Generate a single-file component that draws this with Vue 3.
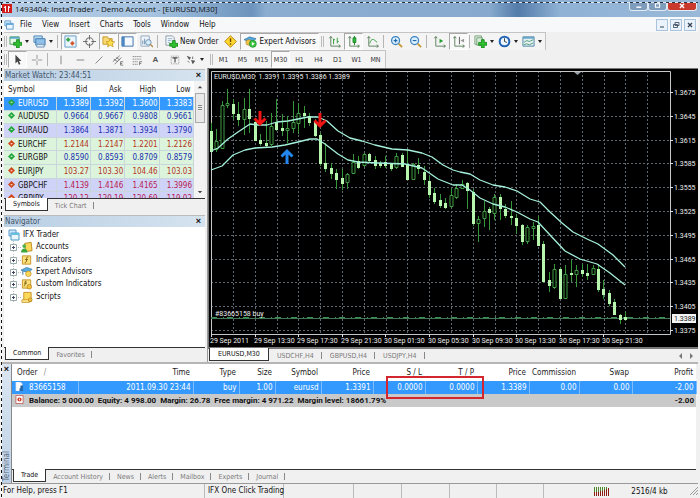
<script setup>
const menus = ['File', 'View', 'Insert', 'Charts', 'Tools', 'Window', 'Help']

const plus = '<path d="M8 5h3v3h3v3h-3v3H8v-3H5V8h3z" fill="#2fc02f" stroke="#0b7d12" stroke-width=".8"/>'
const axes = '<path d="M3 2v10h10M1.500 3.500L3 1.500l1.500 2M11.500 10.500l2 1.500-2 1.500" fill="none" stroke="#5b7f5b"/>'

const icons = {
  newChart: '<path d="M1 2h10v8H1z" fill="#e8f6e6" stroke="#4f9a62"/><path d="M1 2h10v2H1z" fill="#58a9c9"/>' + plus,
  profiles: '<path d="M1 1h9v7H1z" fill="#b7d8f1" stroke="#4c86b8"/><path d="M3 4h10v7H3z" fill="#8fc0ea" stroke="#3e76aa"/><path d="M4 10h8v3H4z" fill="#dceaf6" stroke="#6f94b5"/>',
  watch: '<path d="M1 1h12v12H1z" fill="#e9f4fc" stroke="#5e9cc8"/><path d="M4.500 2.500L7 5 4.500 7.500 2 5z" fill="#3aa64a"/><path d="M9 6.500L11.500 9 9 11.500 6.500 9z" fill="#d4572e"/>',
  target: '<circle cx="7" cy="7" r="4" fill="none" stroke="#777" stroke-width="1.200"/><path d="M7 0v5M7 9v5M0 7h5M9 7h5" stroke="#666"/>',
  star: '<path d="M1 2h5l1 2h4v6H1z" fill="#f7d872" stroke="#c79a2a"/><path d="M9 4l1.400 3 3.300.300-2.500 2.200.800 3.300-3-1.800-3 1.800.800-3.300L4.300 7.300l3.300-.300z" fill="#ffe24d" stroke="#bd8b1b" stroke-width=".7"/>',
  panel: '<path d="M1 2h12v10H1z" fill="#f3f9ff" stroke="#3a6ea5"/><path d="M1 2h3v10H1z" fill="#4c87c4"/>',
  tester: '<path d="M1 1h9v11H1z" fill="#eef4fa" stroke="#93a9bd"/><path d="M3 10V6M5 10V4M7 10V7" stroke="#6c8fae"/><circle cx="9" cy="8" r="3" fill="#d6ecfb" stroke="#6b8fb0"/><path d="M11 10l3 3" stroke="#b08b4a" stroke-width="1.500"/>',
  order: '<path d="M1 1h7l2 2v8H1z" fill="#f7fafc" stroke="#8798a6"/><path d="M3 4h5M3 6h4M3 8h2" stroke="#8fb0cc"/><path d="M8 6h3v3h3v3h-3v2H8v-2H5V9h3z" fill="#2fc02f" stroke="#0b7d12" stroke-width=".8"/>',
  alert: '<path d="M7 .700L13.300 7 7 13.300.700 7z" fill="#ffd630" stroke="#b98510"/><path d="M7 3.500v4M7 9v1.500" stroke="#6b4a00" stroke-width="1.500"/>',
  expert: '<path d="M0 5l6-3 7 2-5 4z" fill="#56a7dc" stroke="#2a6d9d" stroke-width=".7"/><circle cx="5" cy="8" r="3" fill="#f0c34a" stroke="#a5771d" stroke-width=".6"/><circle cx="9.500" cy="9.500" r="3.800" fill="#3ec43e" stroke="#138a20" stroke-width=".7"/><path d="M8.500 7.500v4l3-2z" fill="#fff"/>',
  bars: axes + '<path d="M6 4v6M6 5h1.500M10 3v6M10 7h1.500" stroke="#2c9a38"/>',
  candles: axes + '<path d="M8 1v10" stroke="#16801f"/><path d="M6.500 3h3v5h-3z" fill="#30c43c" stroke="#16801f"/>',
  line: axes + '<path d="M4 9c2-6 4-5 8-1" fill="none" stroke="#2c9a38"/>',
  zoomIn: '<circle cx="6" cy="6" r="4.300" fill="#d9f0ff" stroke="#3a80c0" stroke-width="1.300"/><path d="M6 4v4M4 6h4" stroke="#2468a8" stroke-width="1.200"/><path d="M9.300 9.300L13 13" stroke="#c89a38" stroke-width="2"/>',
  zoomOut: '<circle cx="6" cy="6" r="4.300" fill="#d9f0ff" stroke="#3a80c0" stroke-width="1.300"/><path d="M4 6h4" stroke="#2468a8" stroke-width="1.200"/><path d="M9.300 9.300L13 13" stroke="#c89a38" stroke-width="2"/>',
  scroll: axes + '<path d="M7 4v5l4-2.500z" fill="#25a233"/>',
  shift: axes + '<path d="M8 2v8" stroke="#555"/><path d="M13 4v4L9 6z" fill="#999"/>',
  indicators: '<path d="M1 1h7v9H1z" fill="#eef6ee" stroke="#6f9d75"/><path d="M3 3h6v8H3z" fill="#d9efd9" stroke="#6f9d75"/>' + plus,
  clock: '<circle cx="7" cy="7" r="5.200" fill="#eef7ff" stroke="#2466b4" stroke-width="2.200"/><path d="M7 3.500V7l2.500 1" fill="none" stroke="#333"/>',
  template: '<path d="M1 2h12v10H1z" fill="#e4f1f5" stroke="#4b87a8"/><path d="M1 2h12v2H1z" fill="#6aa6c9"/><path d="M2 8l3-2 3 1 4-2M2 10.500l3-1 3 1 4-2" fill="none" stroke="#4f9a70"/>',
  cursor: '<path d="M4 1v10l2.400-2.200L8 12.500l1.800-.800-1.600-3.500H11z" fill="#444"/>',
  cross: '<path d="M7 1v5M7 8v5M1 7h5M8 7h5" stroke="#888"/>',
  vline: '<path d="M7 2v10" stroke="#777"/>',
  hline: '<path d="M3 7h9" stroke="#777"/>',
  trend: '<path d="M3 11l8-8" stroke="#777"/>',
  channel: '<path d="M1 9l8-7M3 12l8-8M2 6l5 3M5 4l4 3" stroke="#666" stroke-width=".9"/><path d="M13 9h-3v4h3M10 11h2" fill="none" stroke="#555" stroke-width=".8"/>',
  fibo: '<path d="M2 3h10M2 6h10M2 9h6M2 12h6" stroke="#777" stroke-dasharray="1.500 .7"/><path d="M10 13V9h3M10 11h2" fill="none" stroke="#555" stroke-width=".8"/>',
  label: '<path d="M2.500 2.500h9v9h-9z" fill="none" stroke="#888" stroke-dasharray="1 1"/><path d="M4 4.500h6M7 4.500V10" stroke="#444" stroke-width="1.300"/>',
  arrows: '<path d="M2 2l5 2-2 3zM7 7l5 1-3 4z" fill="#555"/><path d="M3 8l2 2M9 3v3" stroke="#555"/>',
}

const mainTools = [
  { icon: 'newChart', label: 'New chart', menu: true },
  { icon: 'profiles', label: 'Profiles', menu: true },
  { sep: true },
  { icon: 'watch', label: 'Market Watch', on: true },
  { icon: 'target', label: 'Data Window' },
  { icon: 'star', label: 'Navigator', on: true },
  { icon: 'panel', label: 'Terminal', on: true },
  { icon: 'tester', label: 'Strategy Tester' },
  { sep: true },
  { icon: 'order', label: 'New Order', text: 'New Order' },
  { icon: 'alert', label: 'Auto check' },
  { icon: 'expert', label: 'Expert Advisors', text: 'Expert Advisors', on: true },
  { grip: true },
  { icon: 'bars', label: 'Bar chart' },
  { icon: 'candles', label: 'Candlesticks', on: true },
  { icon: 'line', label: 'Line chart' },
  { sep: true },
  { icon: 'zoomIn', label: 'Zoom in' },
  { icon: 'zoomOut', label: 'Zoom out' },
  { sep: true },
  { icon: 'scroll', label: 'Auto scroll' },
  { icon: 'shift', label: 'Chart shift', on: true },
  { sep: true },
  { icon: 'indicators', label: 'Indicators', menu: true },
  { icon: 'clock', label: 'Periods', menu: true },
  { icon: 'template', label: 'Templates', menu: true },
]
const drawTools = [
  { icon: 'cursor', label: 'Cursor', on: true },
  { icon: 'cross', label: 'Crosshair' },
  { sep: true },
  { icon: 'vline', label: 'Vertical line' },
  { icon: 'hline', label: 'Horizontal line' },
  { icon: 'trend', label: 'Trendline' },
  { icon: 'channel', label: 'Channel' },
  { icon: 'fibo', label: 'Fibonacci' },
  { letter: 'A', label: 'Text' },
  { icon: 'label', label: 'Text label' },
  { icon: 'arrows', label: 'Arrows', menu: true },
]
const periods = ['M1', 'M5', 'M15', 'M30', 'H1', 'H4', 'D1', 'W1', 'MN']

const quotes = [
  ['EURUSD', '1.3389', '1.3392', '1.3600', '1.3383', 'up', 'sel'],
  ['AUDUSD', '0.9664', '0.9667', '0.9808', '0.9661', 'up', 'green'],
  ['EURAUD', '1.3864', '1.3871', '1.3934', '1.3790', 'up', 'violet'],
  ['EURCHF', '1.2144', '1.2147', '1.2201', '1.2126', 'down', 'green'],
  ['EURGBP', '0.8590', '0.8593', '0.8709', '0.8579', 'up', 'green'],
  ['EURJPY', '103.27', '103.30', '104.46', '103.03', 'down', 'green'],
  ['GBPCHF', '1.4139', '1.4146', '1.4165', '1.3996', 'down', 'violet'],
  ['GBPJPY', '120.12', '120.19', '120.69', '119.02', 'down', 'violet'],
]

const gold = '<path d="M3 1h8v10H3z" fill="#fbd75a" stroke="#c39324"/>'
const tree = [
  { name: 'Accounts', svg: '<path d="M4 2l7-1 1 9-7 1z" fill="#fbd75a" stroke="#b98a1e"/><circle cx="3.500" cy="5" r="2" fill="#4bb04b"/><path d="M0 12c0-6 7-6 7 0z" fill="#3fa63f"/>' },
  { name: 'Indicators', svg: '<path d="M1.500 1.500h9v9h-9z" fill="#fbe07a" stroke="#c39324"/><path d="M8 3c-2-1-2 1-2 3s-.500 3-2 3M4.500 5.500h3" fill="none" stroke="#7a5a10"/>' },
  { name: 'Expert Advisors', svg: '<path d="M0 4l6-3 6 2-4 4z" fill="#58acd9" stroke="#2a6d9d" stroke-width=".7"/><circle cx="8" cy="8" r="3" fill="#fbd75a" stroke="#b98a1e" stroke-width=".7"/><path d="M2 5v4" stroke="#2a6d9d"/>' },
  { name: 'Custom Indicators', svg: '<path d="M1.500 1.500h9v9h-9z" fill="#fbe07a" stroke="#c39324"/><path d="M6 3C4 2 5 4 4.500 6S4 8 3 8M3.500 5h3" fill="none" stroke="#7a5a10"/><circle cx="9" cy="9" r="2.500" fill="#f5c33a" stroke="#a5771d" stroke-width=".7"/>' },
  { name: 'Scripts', svg: gold + '<path d="M1 9h8v3H1z" fill="#fde68a" stroke="#c39324" stroke-width=".8"/><circle cx="10" cy="9" r="2" fill="#f5c33a" stroke="#a5771d" stroke-width=".7"/>' },
]

const gridX = Array.from({ length: 20 }, (_, i) => Math.round(233 + i * 21.8) + 0.5)
const gridY = Array.from({ length: 11 }, (_, i) => Math.round(92 + i * 23.8) + 0.5)
const prices = gridY.map((y, i) => ({ y, label: (1.3675 - i * 0.003).toFixed(4) }))
const times = ['29 Sep 2011', '29 Sep 13:30', '29 Sep 17:30', '29 Sep 21:30', '30 Sep 01:30', '30 Sep 05:30', '30 Sep 09:30', '30 Sep 13:30', '30 Sep 17:30', '30 Sep 21:30']
  .map((label, i) => ({ label, x: 210 + Math.round(i * 43.6) }))

// high, body top, body bottom, low; f = falling (filled), r = rising (hollow)
const candles = `123 131 151 152 f|129 141 149 152 r|101 105 148 149 r|89 103 105 108 r|99 104 113 119 f|102 114 119 126 f|98 109 119 135 r|89 109 118 133 f
121 122 140 141 f|134 140 143 146 f|121 143 145 147 f|113 126 144 146 r|99 122 129 131 f|114 128 130 136 f|116 128 130 143 r|101 122 128 133 r
103 113 123 134 r|106 113 115 128 f|113 116 122 126 f|119 122 135 137 f|133 135 163 166 f|143 163 168 172 f|163 168 173 179 f|169 173 179 189 f
169 178 183 190 f|173 174 182 189 r|154 162 173 174 r|156 161 167 169 f|153 154 165 167 r|153 154 160 163 f|156 160 165 169 f|161 163 165 168 f
156 162 165 168 f|163 164 168 171 f|153 156 167 169 r|153 155 166 167 f|149 164 179 180 f|163 164 179 180 r|158 165 168 174 f|166 172 179 185 f
176 181 194 198 f|188 193 201 204 f|194 200 205 208 f|198 203 207 209 f|188 195 206 208 r|184 188 197 199 r|180 184 188 189 r|182 183 190 209 f
189 192 223 226 f|216 219 223 242 r|201 211 218 227 r|207 209 212 230 f|194 197 213 220 r|194 197 208 220 f|204 209 215 218 f|201 216 217 225 f
214 218 225 234 f|224 225 241 245 f|225 227 241 244 r|222 226 228 240 r|216 225 245 246 f|241 244 281 283 f|272 280 285 292 f|264 269 287 289 r
267 269 298 299 f|265 274 298 299 r|260 273 274 282 f|265 270 274 287 r|264 270 273 277 f|264 273 275 280 f|265 268 274 275 r|264 269 289 292 f
280 289 294 299 f|290 293 303 306 f|299 302 314 315 f|314 315 319 324 f|312 317 319 321 f`
  .split(/[|\n]/)
  .map((row, i) => {
    const [high, top, bottom, low, kind] = row.trim().split(' ')
    return { x: Math.round(211 + i * 5.45) + 0.5, high: +high, top: +top, bottom: +bottom, low: +low, rising: kind === 'r' }
  })
const upperBand = '211,151 218,148 228,139 238,132 250,124 258,125 267,125 277,122 288,121 298,119 308,117 318,117 327,121 338,131 350,138 362,141 375,145 392,149 408,150 422,153 432,157 443,165 453,170 460,172 470,174 480,180 493,185 505,187 517,191 530,199 540,202 550,212 562,223 573,232 587,239 598,244 613,255 625,267'
const lowerBand = '211,170 222,166 233,155 245,150 255,148 272,147 285,145 298,142 310,139 317,139 325,144 338,154 348,160 358,162 378,163 405,164 422,168 438,179 453,185 462,185 470,190 480,198 493,204 505,207 517,212 530,219 538,222 550,235 565,251 580,259 597,264 610,273 625,285'

const chartTabs = ['EURUSD,M30', 'USDCHF,H4', 'GBPUSD,H4', 'USDJPY,H4']
const orderHead = ['Time', 'Type', 'Size', 'Symbol', 'Price', 'S / L', 'T / P', 'Price', 'Commission', 'Swap', 'Profit']
const orderRow = ['2011.09.30 23:44', 'buy', '1.00', 'eurusd', '1.3391', '0.0000', '0.0000', '1.3389', '0.00', '0.00', '-2.00']
const terminalTabs = ['Trade', 'Account History', 'News', 'Alerts', 'Mailbox', 'Experts', 'Journal']
</script>

<template>
  <div class="window">
    <header class="titlebar">
      <svg class="logo" viewBox="0 0 10 11"><path d="M0 1h10v9H0z" fill="#d31b1b" /><path d="M3.500 3v6M6.500 3v6M2 5l1.500-2M8 5L6.500 3" fill="none" stroke="#fff" /></svg>
      <h1>1493404: InstaTrader - Demo Account - [EURUSD,M30]</h1>
      <div class="sysbuttons">
        <button class="sys" aria-label="Minimize"><svg viewBox="0 0 20 10"><path d="M7 6h7" stroke="#fff" stroke-width="2" /></svg></button>
        <button class="sys" aria-label="Maximize"><svg viewBox="0 0 20 10"><path d="M7 1h6v5H7z" fill="none" stroke="#fff" stroke-width="1.500" /></svg></button>
        <button class="sys close" aria-label="Close"><svg viewBox="0 0 20 10"><path d="M7 1l6 6M13 1L7 7" stroke="#fff" stroke-width="2" /></svg></button>
      </div>
    </header>

    <nav class="menubar">
      <svg class="docicon" viewBox="0 0 12 12"><path d="M1 1h7v6H1z" fill="#cfe6f7" stroke="#5a9bd0" /><path d="M3 4h8v7H3z" fill="#eaf5fd" stroke="#4a8bc4" /><path d="M3 4h8v2H3z" fill="#66aee0" /></svg>
      <button v-for="m in menus" :key="m" class="menu">{{ m }}</button>
      <div class="docbuttons">
        <button aria-label="Minimize chart"><svg viewBox="0 0 10 10"><path d="M3 7h4" stroke="#345" /></svg></button>
        <button aria-label="Restore chart"><svg viewBox="0 0 10 10"><path d="M4 2.500h4v3H4zM2.500 4.500h4v3h-4z" fill="none" stroke="#345" stroke-width=".8" /></svg></button>
        <button aria-label="Close chart"><svg viewBox="0 0 10 10"><path d="M3 3l4 4M7 3L3 7" stroke="#345" stroke-width="1.300" /></svg></button>
      </div>
    </nav>

    <div class="toolrow">
      <div class="toolbar">
        <i class="grip"></i>
        <template v-for="(t, i) in mainTools" :key="i">
          <i v-if="t.sep" class="sep"></i>
          <i v-else-if="t.grip" class="grip edge"></i>
          <button v-else class="tool" :class="{ on: t.on, wide: t.text, drop: t.menu }" :aria-label="t.label">
            <svg class="icon" viewBox="0 0 14 14" v-html="icons[t.icon]"></svg>
            <span v-if="t.text">{{ t.text }}</span>
          </button>
        </template>
      </div>
    </div>
    <div class="toolrow">
      <div class="toolbar small">
        <i class="grip"></i>
        <template v-for="(t, i) in drawTools" :key="i">
          <i v-if="t.sep" class="sep"></i>
          <button v-else class="tool" :class="{ on: t.on, drop: t.menu }" :aria-label="t.label">
            <b v-if="t.letter" class="letter">{{ t.letter }}</b>
            <svg v-else class="icon" viewBox="0 0 14 14" v-html="icons[t.icon]"></svg>
          </button>
        </template>
        <i class="grip edge"></i>
        <button v-for="p in periods" :key="p" class="tool period" :class="{ on: p === 'M30' }">{{ p }}</button>
      </div>
    </div>

    <main class="work">
      <aside class="side">
        <section class="panel watch">
          <div class="caption"><h2>Market Watch: 23:44:51</h2><button class="x" aria-label="Close Market Watch">×</button></div>
          <div class="scroller">
            <table class="quotes">
              <thead><tr><th>Symbol</th><th>Bid</th><th>Ask</th><th>High</th><th>Low</th></tr></thead>
              <tbody>
                <tr v-for="q in quotes" :key="q[0]" :class="[q[5], q[6]]">
                  <td>
                    <svg class="dir" viewBox="0 0 8 8"><path d="M4 0l4 4-4 4-4-4z" :fill="q[5] === 'up' ? '#22a53c' : '#d0481d'" /><path :d="q[5] === 'up' ? 'M4 2.500l1.500 2h-3z' : 'M4 5.500l1.500-2h-3z'" fill="#fff" opacity=".7" /></svg>{{ q[0] }}
                  </td>
                  <td>{{ q[1] }}</td><td>{{ q[2] }}</td><td>{{ q[3] }}</td><td>{{ q[4] }}</td>
                </tr>
              </tbody>
            </table>
            <div class="scrollbar">
              <svg viewBox="0 0 8 5"><path d="M4 1l3 3H1z" fill="#444" /></svg>
              <div class="thumb"></div>
              <svg viewBox="0 0 8 5"><path d="M4 4L1 1h6z" fill="#444" /></svg>
            </div>
          </div>
          <div class="tabs"><button class="tab active">Symbols</button><button class="tab">Tick Chart</button></div>
        </section>

        <section class="panel navigator">
          <div class="caption"><h2>Navigator</h2><button class="x" aria-label="Close Navigator">×</button></div>
          <div class="treebox">
            <ul class="tree">
              <li class="root"><svg class="node" viewBox="0 0 12 12"><path d="M1 1h7v6H1z" fill="#cfe6f7" stroke="#5a9bd0" /><path d="M3 4h8v7H3z" fill="#eaf5fd" stroke="#4a9bc4" /><path d="M3 4h8v2H3z" fill="#66bee0" /></svg>IFX Trader</li>
              <li v-for="n in tree" :key="n.name">
                <svg class="expander" viewBox="0 0 11 12"><path d="M3.500 0v12M6 6.500h5" stroke="#bbb" stroke-dasharray="1 1" /><path d="M.500 3.500h6v6h-6z" fill="#fff" stroke="#9aa" /><path d="M2 6.500h3M3.500 5v3" stroke="#446" /></svg>
                <svg class="node" viewBox="0 0 13 12" v-html="n.svg"></svg>{{ n.name }}
              </li>
            </ul>
          </div>
          <div class="tabs"><button class="tab active">Common</button><button class="tab">Favorites</button></div>
        </section>
      </aside>

      <section class="chartpane">
        <svg class="chart" viewBox="208 68 490 279" role="img" aria-label="EURUSD M30 candlestick chart">
          <path d="M208 68h490v279H208z" fill="#000" />
          <path d="M208.500 347V68.500H698" fill="none" stroke="#777" />
          <g stroke="#5f6972" stroke-dasharray="2 2">
            <path v-for="x in gridX" :key="x" :d="`M${x} 71V334`" />
            <path v-for="y in gridY" :key="y" :d="`M211 ${y}H670`" />
          </g>
          <path d="M211.500 334V71.500H670.500V334.500H211" fill="none" stroke="#c4c8c8" />
          <path v-for="p in prices" :key="p.label" :d="`M670 ${p.y}h3`" stroke="#ddd" />
          <path v-for="t in times" :key="t.label" :d="`M${t.x + 1}.5 334v3`" stroke="#ddd" />
          <path d="M574 72h7l-3.500 3z" fill="#9aa0a8" />
          <path d="M211 318.500H670" stroke="#3f7a54" />
          <path d="M211 317.500H670" stroke="#3f8f58" stroke-dasharray="6 6 1 3" />
          <g v-for="c in candles" :key="c.x">
            <path :d="`M${c.x} ${c.high}V${c.low}`" stroke="#35963a" />
            <path v-if="c.rising" :d="`M${c.x - 1.5} ${c.top + 0.5}h3V${c.bottom + 0.5}h-3z`" fill="#000" stroke="#3f9c42" />
            <path v-else :d="`M${c.x - 1.5} ${c.top}h3V${c.bottom + 1}h-3z`" fill="#b8f5ae" />
          </g>
          <g fill="none" stroke="#a5f0dc" stroke-width="1.300" stroke-linejoin="round">
            <polyline :points="upperBand" />
            <polyline :points="lowerBand" />
          </g>
          <g fill="none" stroke-width="3">
            <path d="M260 111v13M254.500 118.500l5.500 5.500 5.500-5.500" stroke="#f01414" />
            <path d="M320 113v13M314.500 120.500l5.500 5.500 5.500-5.500" stroke="#f01414" />
            <path d="M287 164v-13M281.500 156.500l5.500-5.500 5.500 5.500" stroke="#2488f0" />
          </g>
          <g class="charttext">
            <text x="214" y="79">EURUSD,M30&#160; 1.3391 1.3395 1.3386 1.3389</text>
            <text x="215" y="316">#83665158 buy</text>
            <text v-for="p in prices" :key="p.label" x="674" :y="p.y + 2.5">{{ p.label }}</text>
            <text v-for="t in times" :key="t.label" :x="t.x" y="343">{{ t.label }}</text>
          </g>
          <path d="M672 314h24v9h-24z" fill="#f4f4f4" />
          <text class="charttext dark" x="674" y="321">1.3389</text>
        </svg>
        <div class="tabs charttabs">
          <button v-for="(c, i) in chartTabs" :key="c" class="tab" :class="{ active: i === 0 }">{{ c }}</button>
          <svg class="tabarrows" viewBox="0 0 16 6"><path d="M4 0v6L1 3zM12 0v6l3-3z" fill="#777" /></svg>
        </div>
      </section>
    </main>

    <section class="terminal">
      <div class="strip"><button class="x" aria-label="Close Terminal">×</button><h2>Terminal</h2></div>
      <div class="termbody">
        <div class="orders">
          <table>
            <colgroup><col v-for="n in 12" :key="n" :class="'c' + n"></colgroup>
            <thead><tr><th>Order <span class="sort">/</span></th><th v-for="(h, i) in orderHead" :key="i">{{ h }}</th></tr></thead>
            <tbody>
              <tr class="position">
                <td><svg class="doc" viewBox="0 0 10 10"><path d="M1 0h5l2 2v8H1z" fill="#fff" stroke="#cfdbe6" stroke-width=".6" /><path d="M6 4h3v6H5V7h1z" fill="#2566a8" /></svg>83665158</td>
                <td v-for="(v, i) in orderRow" :key="i">{{ v }}</td>
              </tr>
              <tr class="balance">
                <td colspan="11"><svg class="doc" viewBox="0 0 10 10"><path d="M1 .500h8v9H1z" fill="#fff" stroke="#b66" /><circle cx="5" cy="5" r="2.300" fill="#d33a1e" /><path d="M5 4v2" stroke="#fff" /></svg>Balance: 5 000.00&#160; Equity: 4 998.00&#160; Margin: 26.78&#160; Free margin: 4 971.22&#160; Margin level: 18661.79%</td>
                <td>-2.00</td>
              </tr>
            </tbody>
          </table>
          <div class="marker"></div>
        </div>
        <div class="tabs"><button v-for="(t, i) in terminalTabs" :key="t" class="tab" :class="{ active: i === 0 }">{{ t }}</button></div>
      </div>
    </section>

    <footer class="status">
      <span>For Help, press F1</span><span>IFX One Click Trading</span><span></span><span></span><span></span><span></span><span></span>
      <span class="traffic">
        <svg class="meter" viewBox="0 0 16 9"><path d="M1.500 0v5M3.500 0v5M5.500 0v5M7.500 0v4M9.500 0v4M11.500 0v3M13.500 0v2" stroke="#4c8a2c" /><path d="M1.500 5v4M3.500 5v4M5.500 5v4M7.500 4v5M9.500 4v5M11.500 3v6M13.500 2v7M15.500 1v8" stroke="#8c1a12" /></svg>
        2516/4 kb
        <svg class="resize" viewBox="0 0 8 8"><path d="M0 8l8-8M3 8l5-5M6 8l2-2" stroke="#999" /></svg>
      </span>
    </footer>
  </div>
</template>

<style>
body { margin: 0; background: #f0f0f0; }
</style>

<style scoped>
.window {
  position: relative;
  display: flex;
  flex-direction: column;
  min-height: 100vh;
  box-sizing: border-box;
  padding: 0 2px;
  background: #f0f0f0;
  color: #111;
  font: 8px/12px "DejaVu Sans Condensed", Roboto, sans-serif;
  overflow: hidden;
}
.window::before, .window::after { content: ""; position: absolute; pointer-events: none; }
.window::before { left: 1px; top: 2px; bottom: 0; width: 1px; background: repeating-linear-gradient(#111 0 3px, #fff 3px 6px); }
.window::after { left: 0; right: 2px; top: 2px; height: 1px; background: repeating-linear-gradient(90deg, #2a3440 0 3px, #dfe8f0 3px 6px); }
h1, h2 { margin: 0; font: inherit; }
button { font: inherit; color: inherit; border: 0; padding: 0; margin: 0; background: none; }
svg { display: block; flex: none; }

.titlebar {
  display: flex;
  align-items: center;
  gap: 3px;
  height: 17px;
  margin: 0 -2px;
  padding: 0 3px 0 2px;
  background: linear-gradient(90deg, #b4cde5 0, #a5c3e0 22%, #7ba0c6 32%, #6d94bd 36%, #8badd0 38%, #86a9cd 70%, #547ca9 74%, #8fb2d5 80%, #9ab9d8);
}
.logo { width: 10px; height: 11px; }
.titlebar h1 { flex: 1; font: 8px/15px "Open Sans", sans-serif; }
.sysbuttons { display: flex; align-self: flex-start; padding-top: 3px; }
.sys { width: 19px; height: 8px; background: #7e9dbd; border: 1px solid #e1ebf4; border-top: 0; border-radius: 0 0 3px 3px; }
.sys svg { width: 100%; height: 7px; }
.close { width: 30px; background: #c93a2c; }

.menubar { display: flex; align-items: center; height: 15px; background: #f7f8fa; padding: 0 2px; }
.docicon { width: 10px; height: 10px; margin-right: 1px; }
.menu { padding: 0 5px; }
.docbuttons { display: flex; gap: 2px; margin-left: auto; }
.docbuttons button { width: 12px; height: 12px; border: 1px solid #a9c3dc; background: #eaf3fb; }
.docbuttons svg { width: 10px; height: 10px; }

.toolrow { display: flex; height: 18px; padding-left: 2px; }
.toolbar { display: flex; align-items: stretch; border: solid #c4c4c4; border-width: 1px 1px 0 0; background: #f4f4f4; box-sizing: border-box; }
.grip { width: 1px; margin: 3px 1px 3px 0; border-left: 1px solid #bbb; border-right: 1px solid #bbb; }
.grip.edge { margin-left: 2px; }
.sep { width: 1px; margin: 2px 2px 2px 1px; border-left: 1px solid #b4b4b4; }
.tool { display: flex; align-items: center; justify-content: center; width: 19px; flex: none; box-sizing: border-box; border: 1px solid transparent; }
.tool.on { border-color: #a8a8a8 #fff #fff #a8a8a8; background: #f9f9f9; }
.icon { width: 13px; height: 13px; }
.tool.wide { width: auto; gap: 2px; padding: 0 2px 0 3px; }
.tool.drop { width: 24px; justify-content: flex-start; }
.tool.drop::after { content: ""; margin-left: 3px; border: 2px solid transparent; border-top: 3px solid #222; border-bottom: 0; }
.small .icon { width: 12px; height: 12px; }
.letter { font: bold 8px/10px "Liberation Sans", sans-serif; color: #555; }
.small .period { font-size: 7px; line-height: 10px; color: #333; }

.work { display: grid; grid-template-columns: 206px minmax(0, 1fr); flex: none; }
.side { display: flex; flex-direction: column; gap: 3px; padding: 1px 2px 1px 2px; border-right: 1px solid #999; }
.panel { display: flex; flex-direction: column; border-top: 1px solid #bbb; }
.navigator { flex: 1; }
.caption { display: flex; align-items: center; justify-content: space-between; height: 11px; background: linear-gradient(90deg, #b9cfe4, #d6e3ef); color: #45556a; line-height: 10px; padding: 0 4px 0 1px; }
.x { font: bold 9px/9px "Liberation Sans", sans-serif; color: #111; }
.scroller { display: flex; height: 117px; overflow: hidden; background: #fff; }
.quotes { flex: 1; height: 125px; border-collapse: collapse; table-layout: fixed; line-height: 11px; }
.quotes th { height: 16px; padding: 0 3px; font-weight: 400; text-align: right; color: #222; }
.quotes th:first-child { width: 45px; text-align: left; padding-left: 4px; }
.quotes td { padding: 0 1px; text-align: right; border: solid #c9d6dc; border-width: 0 1px 1px 0; }
.quotes td:first-child { text-align: left; padding-left: 4px; color: #111; white-space: nowrap; }
.dir { display: inline-block; width: 7px; height: 7px; margin-right: 3px; }
.up { color: #1a2fb0; }
.down { color: #b5341c; }
.green { background: #dcf4dc; }
.violet { background: #cfd3f7; }
.sel, .sel td:first-child { background: #3399ff; color: #fff; }
.down.violet { color: #b82050; }
.scrollbar { display: flex; flex-direction: column; align-items: center; width: 11px; padding: 4px 0; background: #f3f3f3; }
.scrollbar svg { width: 6px; height: 4px; }
.scrollbar svg:last-child { margin-top: auto; }
.thumb { width: 8px; height: 28px; margin-top: 4px; border: 1px solid #aaa; background: repeating-linear-gradient(#888 0 1px, #eee 1px 2px) center / 4px 6px no-repeat, #e9e9e9; }

.tabs { display: flex; align-items: stretch; height: 14px; border-top: 1px solid #333; background: #f0f0f0; box-sizing: border-box; color: #7a7a7a; }
.tab { position: relative; padding: 0 7px; font-size: 7px; line-height: 12px; }
.tab:not(.active)::after { content: ""; position: absolute; right: 0; top: 3px; bottom: 3px; border-right: 1px solid #888; }
.tab.active { margin: -1px 0 1px 1px; background: #fff; color: #111; border: solid #333; border-width: 0 1px 1px; }

.treebox { flex: 1; background: #fff; padding: 2px 4px; }
.tree { display: grid; grid-template-rows: repeat(6, 1fr); height: 74px; margin: 0; padding: 0; list-style: none; }
.tree li { display: flex; align-items: center; padding-left: 2px; }
.tree li.root { padding-left: 0; }
.node { width: 12px; height: 12px; margin-right: 3px; }
.expander { width: 11px; height: 12px; }

.chartpane { display: flex; flex-direction: column; }
.chart { width: 100%; height: auto; }
.charttext { fill: #eee; font: 7px Roboto, "DejaVu Sans", sans-serif; }
.charttext.dark { fill: #222; }
.charttabs { border-top: 2px solid #777; height: 15px; }
.charttabs .tab { padding: 0 8px; }
.tabarrows { width: 16px; height: 6px; margin: 4px 4px 0 auto; }

.terminal { display: flex; flex: 1; border-top: 2px solid #b5b5b5; }
.strip { display: flex; flex-direction: column; justify-content: space-between; align-items: center; width: 9px; padding: 1px 0 2px; background: linear-gradient(#dbe6f1, #bfd2e6); color: #55677c; }
.strip h2 { writing-mode: vertical-rl; transform: rotate(180deg); line-height: 9px; }
.termbody { display: flex; flex-direction: column; flex: 1; min-width: 0; border-left: 1px solid #888; margin-right: 2px; }
.orders { position: relative; flex: 1; background: #fff; }
.orders table { width: 100%; table-layout: fixed; border-collapse: collapse; line-height: 12px; }
.orders th { height: 17px; padding: 0 3px; font-weight: 400; text-align: right; white-space: nowrap; color: #222; }
.orders td { height: 13px; padding: 0 2px; text-align: right; white-space: nowrap; }
.orders th:first-child { text-align: left; padding-left: 5px; }
.orders td:first-child { text-align: left; padding-left: 3px; }
.sort { margin-left: 4px; color: #888; }
.doc { display: inline-block; width: 9px; height: 9px; margin-right: 5px; vertical-align: -1px; }
.position { background: #3399ff; color: #fff; }
.position td { border-right: 1px solid #7dbcff; }
.balance { background: #c9c9c9; font-family: Roboto, sans-serif; font-weight: 700; }
.c1 { width: 66px; } .c2 { width: 115px; } .c3 { width: 46px; } .c4 { width: 36px; } .c5 { width: 46px; }
.c6, .c7, .c8, .c9 { width: 52px; } .c10 { width: 50px; } .c11 { width: 53px; } .c12 { width: 64px; }
.marker { position: absolute; left: 54.7%; top: 12px; width: 14.3%; height: 23px; box-sizing: border-box; border: 2px solid #d3262e; }

.status { display: grid; grid-template-columns: 203px 79px 70px 48px 48px 47px 47px 1fr; height: 14px; border-top: 1px solid #999; line-height: 13px; }
.status span { padding-left: 3px; border-right: 1px solid #bbb; white-space: nowrap; }
.status span:first-child { padding-left: 1px; }
.status .traffic { display: flex; align-items: center; justify-content: space-between; padding-left: 49px; border: 0; }
.meter { width: 16px; height: 9px; }
.resize { width: 8px; height: 8px; }
</style>
